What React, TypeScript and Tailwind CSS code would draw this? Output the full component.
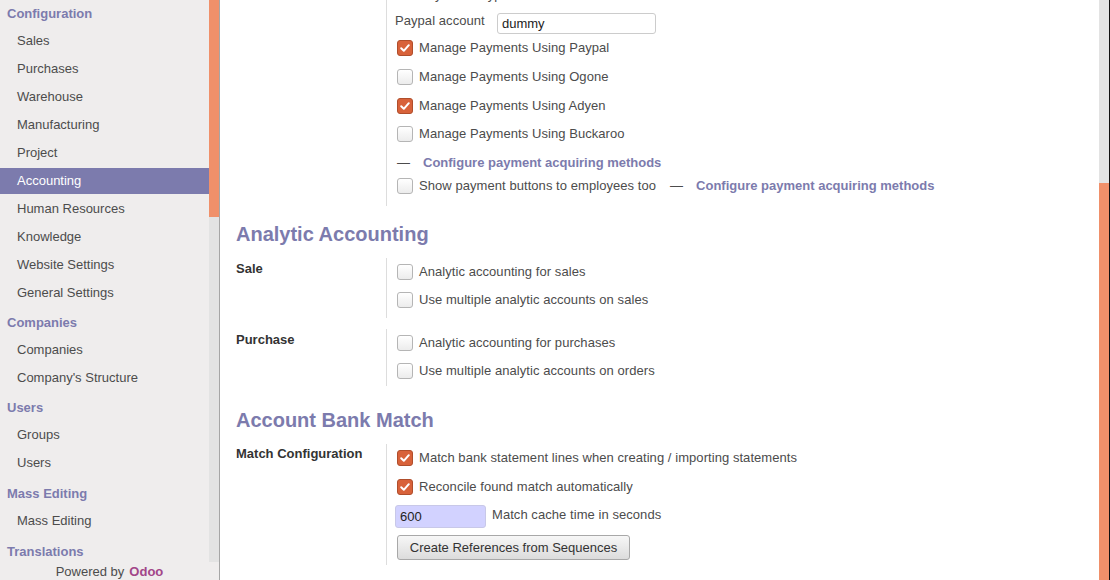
import React from "react";

const Checkbox = ({ checked }: { checked?: boolean }) =>
  checked ? (
    <span className="w-[16px] h-[16px] rounded-[3px] bg-[#d8623a] border border-[#b04e2c] flex items-center justify-center shrink-0">
      <svg width="12" height="12" viewBox="0 0 12 12">
        <path d="M2.2 6.3 L4.8 8.8 L9.8 3.2" fill="none" stroke="#fff" strokeWidth="2" strokeLinecap="round" strokeLinejoin="round" />
      </svg>
    </span>
  ) : (
    <span className="w-[16px] h-[16px] rounded-[3px] bg-gradient-to-b from-[#ffffff] to-[#ececec] border border-[#b5b5b5] shrink-0" />
  );

const CheckRow = ({ checked, label, h }: { checked?: boolean; label: string; h: string }) => (
  <div className={`flex items-center ${h}`}>
    <Checkbox checked={checked} />
    <span className="ml-[6px] leading-[16px] tracking-[0.06px]">{label}</span>
  </div>
);

const Header = ({ children, mt }: { children: React.ReactNode; mt: string }) => (
  <div className={`h-[26px] shrink-0 flex items-center pl-[7px] font-bold text-[#7c7bad] ${mt}`}>{children}</div>
);

const Item = ({ children, active }: { children: React.ReactNode; active?: boolean }) => (
  <div className={`h-[26px] shrink-0 my-[1px] flex items-center pl-[17px] ${active ? "bg-[#7c7bad] text-white" : "text-[#4c4c4c]"}`}>{children}</div>
);

export default function App() {
  return (
    <div className="w-[1110px] h-[580px] flex overflow-hidden font-['Liberation_Sans',Arial,sans-serif] text-[13px] text-[#4c4c4c] bg-white">
      <aside className="w-[220px] h-full flex flex-col bg-[#efeded] border-r border-[#a6a6a6] shrink-0">
        <div className="flex h-[562px]">
          <nav className="w-[209px] overflow-hidden flex flex-col pt-[1px]">
            <Header mt="mt-0">Configuration</Header>
            <Item>Sales</Item>
            <Item>Purchases</Item>
            <Item>Warehouse</Item>
            <Item>Manufacturing</Item>
            <Item>Project</Item>
            <Item active>Accounting</Item>
            <Item>Human Resources</Item>
            <Item>Knowledge</Item>
            <Item>Website Settings</Item>
            <Item>General Settings</Item>
            <Header mt="mt-[3px]">Companies</Header>
            <Item>Companies</Item>
            <Item>Company's Structure</Item>
            <Header mt="mt-[3px]">Users</Header>
            <Item>Groups</Item>
            <Item>Users</Item>
            <Header mt="mt-[4px]">Mass Editing</Header>
            <Item>Mass Editing</Item>
            <Header mt="mt-[4px]">Translations</Header>
          </nav>
          <div className="w-[10px] flex flex-col">
            <div className="h-[217px] bg-[#f0906a]" />
            <div className="flex-1 bg-[#e3e3e3]" />
          </div>
        </div>
        <div className="h-[18px] flex items-center justify-center leading-none text-[#4c4c4c]">
          Powered by <span className="ml-[5px] font-bold text-[#a24689]">Odoo</span>
        </div>
      </aside>

      <main className="w-[879px] h-full overflow-hidden bg-white pl-[16px] shrink-0">
        <div className="flex flex-col">
          {/* Block 1 */}
          <div className="flex -mt-[17px]">
            <div className="w-[150px] shrink-0" />
            <div className="border-l border-[#dddddd] pl-[10px] pb-[12px] flex flex-col">
              <div className="h-[24px] flex items-center pl-[22px] leading-[16px]">Pay with Paypal</div>
              <div className="h-[26px] flex items-start -ml-[2px]">
                <span className="w-[102px] mt-[6px] leading-[16px] tracking-[0.06px]">Paypal account</span>
                <div className="mt-[6px] w-[159px] h-[21px] border border-[#cccccc] rounded-[3px] bg-white flex items-center pl-[4px] text-[#222]">
                  dummy
                </div>
              </div>
              <CheckRow checked label="Manage Payments Using Paypal" h="h-[29px]" />
              <CheckRow label="Manage Payments Using Ogone" h="h-[29px]" />
              <CheckRow checked label="Manage Payments Using Adyen" h="h-[29px]" />
              <CheckRow label="Manage Payments Using Buckaroo" h="h-[28px]" />
              <div className="h-[30px] flex items-center leading-[16px]">
                <span>—</span>
                <a className="ml-[13px] font-bold text-[#7c7bad]">Configure payment acquiring methods</a>
              </div>
              <div className="h-[16px] flex items-center">
                <Checkbox />
                <span className="ml-[6px] leading-[16px] tracking-[0.06px]">Show payment buttons to employees too</span>
                <span className="ml-[14px]">—</span>
                <a className="ml-[13px] font-bold text-[#7c7bad]">Configure payment acquiring methods</a>
              </div>
            </div>
          </div>

          <h2 className="mt-[16px] h-[24px] leading-[24px] text-[20px] font-bold text-[#7c7bad]">Analytic Accounting</h2>

          <div className="flex mt-[12px]">
            <div className="w-[150px] shrink-0 pt-[3px] leading-[16px] font-bold text-[#333]">Sale</div>
            <div className="border-l border-[#dddddd] pl-[10px] pb-[4px] flex flex-col">
              <CheckRow label="Analytic accounting for sales" h="h-[28px]" />
              <CheckRow label="Use multiple analytic accounts on sales" h="h-[28px]" />
            </div>
          </div>

          <div className="flex mt-[11px]">
            <div className="w-[150px] shrink-0 pt-[3px] leading-[16px] font-bold text-[#333]">Purchase</div>
            <div className="border-l border-[#dddddd] pl-[10px] pb-[1px] flex flex-col">
              <CheckRow label="Analytic accounting for purchases" h="h-[28px]" />
              <CheckRow label="Use multiple analytic accounts on orders" h="h-[28px]" />
            </div>
          </div>

          <h2 className="mt-[22px] h-[24px] leading-[24px] text-[20px] font-bold text-[#7c7bad]">Account Bank Match</h2>

          <div className="flex mt-[12px]">
            <div className="w-[150px] shrink-0 pt-[2px] leading-[16px] font-bold text-[#333]">Match Configuration</div>
            <div className="border-l border-[#dddddd] pl-[10px] pb-[5px] flex flex-col">
              <CheckRow checked label="Match bank statement lines when creating / importing statements" h="h-[28px]" />
              <CheckRow checked label="Reconcile found match automatically" h="h-[29px]" />
              <div className="h-[30px] flex items-start -ml-[2px]">
                <div className="mt-[4px] w-[91px] h-[23px] rounded-[3px] border border-[#c8c8e8] bg-[#d2d2ff] flex items-center pl-[4px] text-[#222]">
                  600
                </div>
                <span className="ml-[6px] mt-[6px] leading-[16px] tracking-[0.06px]">Match cache time in seconds</span>
              </div>
              <div className="pt-[4px]">
                <button className="w-[233px] h-[25px] rounded-[3px] border border-[#a8a8a8] bg-gradient-to-b from-[#f7f7f7] to-[#dcdcdc] text-[#333] text-[13px] leading-none">
                  Create References from Sequences
                </button>
              </div>
            </div>
          </div>
        </div>
      </main>

      <div className="w-[10px] h-full flex flex-col shrink-0">
        <div className="h-[183px] bg-[#e3e3e3]" />
        <div className="flex-1 bg-[#f0906a]" />
      </div>
      <div className="w-[1px] h-full bg-[#111] shrink-0" />
    </div>
  );
}
